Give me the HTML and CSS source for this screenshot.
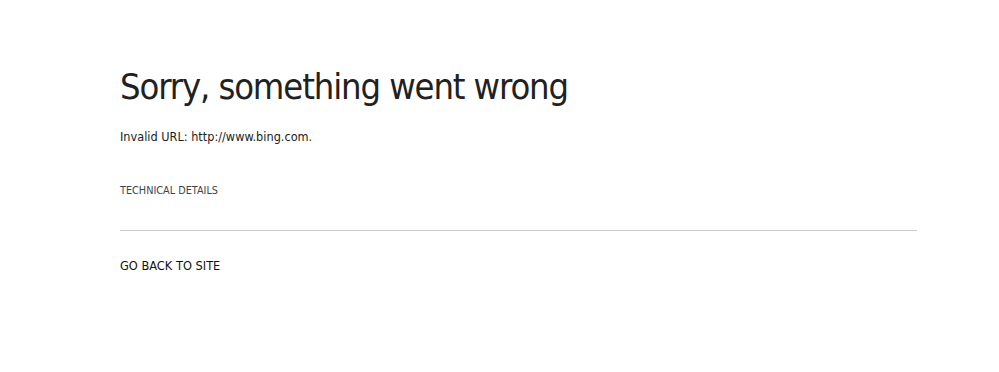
FILE: index.html
```html
<!DOCTYPE html>
<html>
<head>
<meta charset="utf-8">
<link rel="stylesheet" href="styles.css">
</head>
<body>
<main class="page">
  <h1 class="title">Sorry, something went wrong</h1>
  <p class="message">Invalid URL: http://www.bing.com.</p>
  <div class="details">TECHNICAL DETAILS</div>
  <a class="back" href="#">GO BACK TO SITE</a>
</main>
</body>
</html>
```
FILE: styles.css
```css
html, body {
  margin: 0;
  padding: 0;
  background: #ffffff;
}
body {
  font-family: "DejaVu Sans Condensed", "DejaVu Sans", sans-serif;
  color: #222222;
}
.page {
  margin-left: 120px;
  width: 797px;
  padding-top: 64px;
}
.title {
  margin: 0;
  font-weight: normal;
  font-size: 36px;
  line-height: 46px;
  letter-spacing: -1.1px;
  color: #212121;
}
.message {
  margin: 19px 0 0;
  font-size: 12.6px;
  line-height: 16px;
  color: #222;
}
.details {
  margin-top: 39px;
  font-size: 10.8px;
  line-height: 14px;
  color: #444;
  padding-bottom: 32px;
  border-bottom: 1px solid #c8c8c8;
}
.back {
  display: block;
  margin-top: 27px;
  font-size: 12.7px;
  line-height: 16px;
  color: #111;
  text-decoration: none;
}
```
